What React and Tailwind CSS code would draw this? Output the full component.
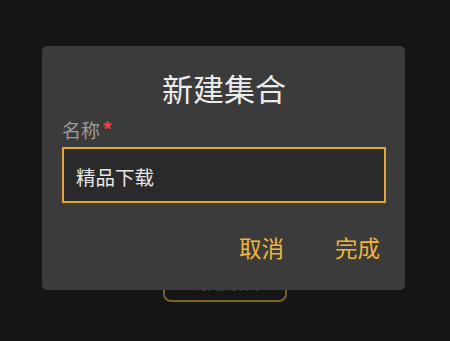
import React from "react";

const font = { fontFamily: '"Noto Sans CJK SC", "Noto Sans", sans-serif' };

const NewCollectionDialog = ({ name = "精品下载" }) => {
  return (
    <div className="absolute left-[42px] top-[46px] w-[363px] h-[244px] rounded-[5px] bg-[#3b3b3b] flex flex-col pl-[20px] pr-[19px]">
      <h2 className="pt-[26px] text-center text-[31px] leading-none text-[#ececec]">
        新建集合
      </h2>
      <div className="mt-[16px] h-[19px] text-[19px] leading-none text-[#9b9b9b]">
        名称<span className="ml-[2px] text-[21px] leading-none font-bold text-[#e5453a]">*</span>
      </div>
      <div className="mt-[9px] h-[56px] border-2 border-[#e2a53b] bg-[#2a2a2a] flex items-center pl-[12px] pt-[4px]">
        <span className="text-[19.5px] leading-none text-[#e6e6e6]">{name}</span>
      </div>
      <div className="mt-[33px] flex justify-end gap-[51px] pr-[6px]">
        <button className="text-[22.5px] leading-none text-[#f2b43c]">取消</button>
        <button className="text-[22.5px] leading-none text-[#f2b43c]">完成</button>
      </div>
    </div>
  );
};

export default function App() {
  return (
    <div className="relative w-[450px] h-[341px] bg-[#161616] overflow-hidden" style={font}>
      {/* page underneath the dialog */}
      <div className="flex flex-col items-center pt-[258px]">
        <button className="w-[124px] h-[44px] rounded-[8px] border-2 border-[#7a6026] text-[18px] text-[#8d8d8d] flex items-center justify-center pt-[2px]">
          新建集合
        </button>
      </div>
      <NewCollectionDialog />
    </div>
  );
}
